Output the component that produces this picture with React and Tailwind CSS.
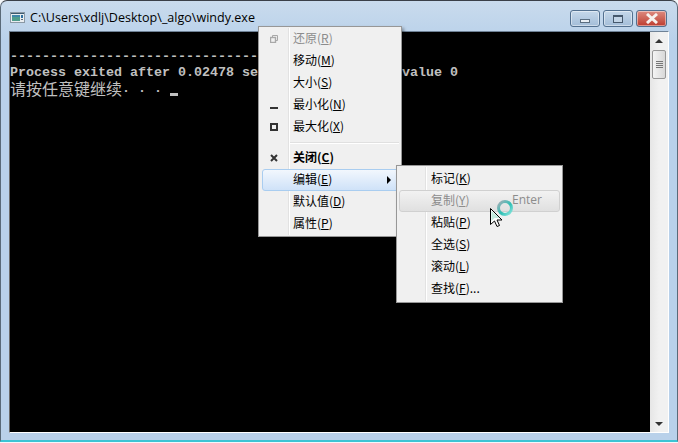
import React from "react";

const cjk = "font-['Noto_Sans_CJK_SC',sans-serif]";

// small glyphs for the system menu gutter
const RestoreIcon = () => (
  <svg width="8" height="8" viewBox="0 0 8 8" fill="none" stroke="#a8a8a8">
    <path d="M2.5 2V.5h5v5H6" />
    <rect x="0.5" y="2.5" width="5" height="5" strokeWidth="1.4" />
  </svg>
);
const MinIcon = () => <div className="w-2 h-[2px] mt-[5px] bg-[#333]" />;
const MaxIcon = () => (
  <svg width="8" height="8" viewBox="0 0 8 8" fill="none" stroke="#333" strokeWidth="2">
    <rect x="1" y="1" width="6" height="6" />
  </svg>
);
const CloseIcon = () => (
  <svg width="8" height="8" viewBox="0 0 8 8" stroke="#333" strokeWidth="2">
    <path d="M1 1l6 6M7 1L1 7" />
  </svg>
);

const MenuItem = ({ label, hot, rest = "", icon, disabled, bold, active, shortcut, arrow, gutter }) => (
  <div className={`relative h-[22px] flex items-center text-[12px] ${disabled ? "text-[#8c8c8c]" : "text-black"} ${bold ? "font-bold" : ""}`}>
    {active && <div className="absolute inset-0 rounded-[3px] border border-[#a9cdf0] bg-gradient-to-b from-[#f2f7fd] to-[#cfe2f8]" />}
    {disabled && shortcut && <div className="absolute inset-0 rounded-[3px] border border-[#d0d0d0] bg-gradient-to-b from-[#f2f2f2] to-[#e0e0e0]" />}
    <div className={`relative ${gutter} shrink-0 flex justify-center pr-[7px]`}>{icon}</div>
    <span className="relative leading-none pb-[2px]">
      {label}(<span className="underline">{hot}</span>){rest}
    </span>
    {shortcut && <span className="absolute left-[113px] pb-[2px] font-['Open_Sans',sans-serif] text-[#8c8c8c]">{shortcut}</span>}
    {arrow && <div className="absolute right-[8px] w-0 h-0 border-y-[4px] border-y-transparent border-l-[4px] border-l-black" />}
  </div>
);

const CaptionButton = ({ className, children }) => (
  <div className={`h-[17px] rounded-[3px] border border-[#53708f] flex items-center justify-center shadow-[inset_0_0_0_1px_rgba(255,255,255,0.45)] ${className}`}>
    {children}
  </div>
);

const SystemMenu = () => (
  <div className={`absolute left-[258px] top-[26px] w-[144px] h-[211px] bg-[#f0f0f0] border border-[#979797] shadow-[2px_2px_3px_rgba(0,0,0,0.35)] p-[1px] ${cjk}`}>
    <div className="absolute left-[29px] top-[1px] bottom-[1px] w-[2px] border-l border-l-[#e2e2e2] border-r border-r-white" />
    <div className="relative ml-[2px] mr-[1px]">
      <MenuItem gutter="w-[31px]" label="还原" hot="R" disabled icon={<RestoreIcon />} />
      <MenuItem gutter="w-[31px]" label="移动" hot="M" />
      <MenuItem gutter="w-[31px]" label="大小" hot="S" />
      <MenuItem gutter="w-[31px]" label="最小化" hot="N" icon={<MinIcon />} />
      <MenuItem gutter="w-[31px]" label="最大化" hot="X" icon={<MaxIcon />} />
      <div className="h-[9px] flex flex-col justify-center pl-[28px]">
        <div className="h-[1px] bg-[#e0e0e0]" />
        <div className="h-[1px] bg-white" />
      </div>
      <MenuItem gutter="w-[31px]" label="关闭" hot="C" bold icon={<CloseIcon />} />
      <MenuItem gutter="w-[31px]" label="编辑" hot="E" active arrow />
      <MenuItem gutter="w-[31px]" label="默认值" hot="D" />
      <MenuItem gutter="w-[31px]" label="属性" hot="P" />
    </div>
  </div>
);

const EditMenu = () => (
  <div className={`absolute left-[396px] top-[165px] w-[167px] h-[138px] bg-[#f0f0f0] border border-[#979797] shadow-[2px_2px_3px_rgba(0,0,0,0.35)] pt-[2px] px-[2px] ${cjk}`}>
    <div className="absolute left-[28px] top-[1px] bottom-[1px] w-[2px] border-l border-l-[#e2e2e2] border-r border-r-white" />
    <div className="relative">
      <MenuItem gutter="w-[32px]" label="标记" hot="K" />
      <MenuItem gutter="w-[32px]" label="复制" hot="Y" disabled shortcut="Enter" />
      <MenuItem gutter="w-[32px]" label="粘贴" hot="P" />
      <MenuItem gutter="w-[32px]" label="全选" hot="S" />
      <MenuItem gutter="w-[32px]" label="滚动" hot="L" />
      <MenuItem gutter="w-[32px]" label="查找" hot="F" rest="..." />
    </div>
  </div>
);

// busy pointer: arrow with the aero ring beside it
const BusyCursor = () => (
  <svg className="absolute left-[488px] top-[200px]" width="28" height="30" viewBox="0 0 28 30">
    <defs>
      <linearGradient id="ring" x1="0" y1="0" x2="1" y2="1">
        <stop offset="0" stopColor="#a4aeb6" />
        <stop offset="0.55" stopColor="#2fc0b6" />
        <stop offset="1" stopColor="#8fe6de" />
      </linearGradient>
    </defs>
    <path d="M2.5 8.5v16l4-3.5 2.5 5.5 2.5-1-2.5-5.5h5z" fill="white" stroke="black" strokeWidth="1" />
    <path d="M3.5 11v10l3-3h5z" fill="#a9e3d2" opacity="0.7" />
    <circle cx="17" cy="8" r="6.5" fill="none" stroke="url(#ring)" strokeWidth="3" />
  </svg>
);

const App = () => {
  return (
    <div className="relative w-[678px] h-[443px] bg-[#f4f7fa] overflow-hidden">
      <div className="w-[678px] h-[442px] flex flex-col rounded-t-[7px] border-t border-x border-t-[#3a4048] border-x-[#5a6a78] border-b-2 border-b-[#3cc4d4] bg-gradient-to-b from-[#c9dbed] to-[#b9d1ea] to-[40px]">
        <div className="h-[30px] flex items-start pl-[9px] pr-[10px] shrink-0">
          <svg className="mt-[11px]" width="15" height="11" viewBox="0 0 15 11">
            <rect x="0.5" y="0.5" width="14" height="10" fill="#e9edf0" stroke="#8a98a4" />
            <rect x="1" y="1" width="13" height="1" fill="#3c5a70" />
            <rect x="2" y="3" width="8" height="6" fill="#4f9c8c" />
            <rect x="2" y="3" width="8" height="2" fill="#3f87a8" />
            <rect x="11" y="3" width="2" height="3" fill="#2f6f9f" />
            <rect x="11" y="7" width="2" height="1" fill="#5f6f7c" />
          </svg>
          <span className="ml-[5px] mt-[7px] text-[12.55px] leading-[20px] text-black whitespace-nowrap font-['Open_Sans',sans-serif]">
            C:\Users\xdlj\Desktop\_algo\windy.exe
          </span>
          <div className="ml-auto mt-[9px] flex gap-[3px]">
            <CaptionButton className="w-[30px] bg-gradient-to-b from-[#c6d8ea] to-[#a3bdd8]">
              <div className="w-[10px] h-[4px] mt-[5px] bg-[#e9eff5] border border-[#5a6d80]" />
            </CaptionButton>
            <CaptionButton className="w-[30px] bg-gradient-to-b from-[#c6d8ea] to-[#a3bdd8]">
              <div className="w-[10px] h-[8px] bg-[#c2d4e6] border border-[#46586c] border-t-2" />
            </CaptionButton>
            <CaptionButton className="w-[31px] border-[#7e2a22] bg-gradient-to-b from-[#dc8a80] to-[#bd3a2e]">
              <svg width="14" height="11" viewBox="0 0 14 11" stroke="#f6f1ee" strokeWidth="3">
                <path d="M2 1l10 9M12 1L2 10" />
              </svg>
            </CaptionButton>
          </div>
        </div>

        <div className="flex-1 min-h-0 flex pl-[8px] pr-[8px] pb-[7px]">
          <div className="flex flex-1 min-h-0 border-l border-l-[#6a6a6a] border-r border-r-white border-b border-b-white border-t border-t-[#6f8296]">
            <div className="w-[640px] bg-black pt-[17px] text-[13.33px] leading-4 text-[#c0c0c0] font-bold font-['Liberation_Mono',monospace] whitespace-pre">
              <div className="h-4">{"-".repeat(40)}</div>
              <div className="h-4">Process exited after 0.02478 seconds with return value 0</div>
              <div className="h-[15px] flex">
                <span className="text-[16px] leading-4 -mt-[1px] font-normal font-['Noto_Sans_CJK_SC',sans-serif]">请按任意键继续</span>
                <span>{". . . "}</span>
                <span className="self-end w-2 h-[3px] bg-[#c0c0c0]" />
              </div>
            </div>
            <div className="w-[18px] flex flex-col bg-gradient-to-r from-[#e6e6e6] via-[#f1f1f1] to-[#f1f1f1]">
              <div className="h-[18px] flex items-center justify-center">
                <div className="w-0 h-0 border-x-[4px] border-x-transparent border-b-[4px] border-b-[#333]" />
              </div>
              <div className="mx-[2px] h-[29px] rounded-[2px] border border-[#979797] bg-gradient-to-r from-[#f4f4f4] to-[#d8d8d8] flex flex-col items-center justify-center gap-[1px]">
                <div className="w-[7px] h-[1px] bg-[#777]" />
                <div className="w-[7px] h-[1px] bg-[#777]" />
                <div className="w-[7px] h-[1px] bg-[#777]" />
                <div className="w-[7px] h-[1px] bg-[#777]" />
              </div>
              <div className="flex-1" />
              <div className="h-[17px] flex items-center justify-center">
                <div className="w-0 h-0 border-x-[4px] border-x-transparent border-t-[4px] border-t-[#333]" />
              </div>
            </div>
          </div>
        </div>
      </div>

      <SystemMenu />
      <EditMenu />
      <BusyCursor />
    </div>
  );
};

export default App;
